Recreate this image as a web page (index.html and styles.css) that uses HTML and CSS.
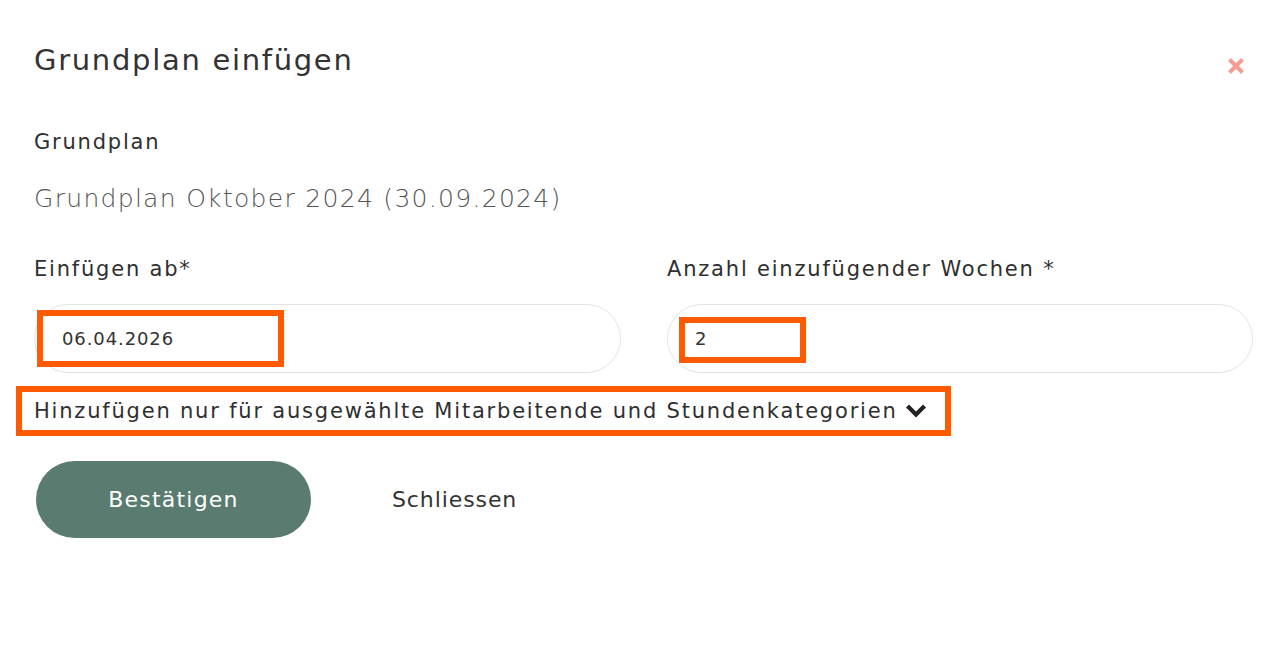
FILE: index.html
```html
<!DOCTYPE html>
<html lang="de">
<head>
<meta charset="utf-8">
<title>Grundplan einfügen</title>
<link rel="stylesheet" href="styles.css">
</head>
<body>
<div class="modal">
  <div class="modal-header">
    <h1 class="modal-title">Grundplan einfügen</h1>
    <button class="close" aria-label="Schliessen">
      <svg width="18" height="18" viewBox="0 0 18 18"><path d="M2.5 2.5 L15.5 15.5 M15.5 2.5 L2.5 15.5" stroke="#f59d95" stroke-width="4"/></svg>
    </button>
  </div>
  <div class="field">
    <div class="label">Grundplan</div>
    <div class="value">Grundplan Oktober 2024 (30.09.2024)</div>
  </div>
  <div class="row">
    <div class="col">
      <div class="label">Einfügen ab*</div>
      <div class="input-wrap">
        <div class="input">06.04.2026</div>
        <span class="mark mark-date"></span>
      </div>
    </div>
    <div class="col">
      <div class="label">Anzahl einzufügender Wochen *</div>
      <div class="input-wrap">
        <div class="input">2</div>
        <span class="mark mark-num"></span>
      </div>
    </div>
  </div>
  <div class="toggle-wrap">
    <div class="toggle">Hinzufügen nur für ausgewählte Mitarbeitende und Stundenkategorien
      <svg class="chev" width="24" height="16" viewBox="0 0 24 16"><path d="M3.5 4 L12 12.5 L20.5 4" fill="none" stroke="#222" stroke-width="4.2"/></svg>
    </div>
    <span class="mark mark-toggle"></span>
  </div>
  <div class="actions">
    <button class="btn-primary">Bestätigen</button>
    <button class="btn-link">Schliessen</button>
  </div>
</div>
</body>
</html>
```
FILE: styles.css
```css
html, body {
  margin: 0;
  padding: 0;
  background: #fff;
}
body {
  font-family: "DejaVu Sans", "Open Sans", sans-serif;
  color: #333;
  width: 1284px;
  height: 648px;
  overflow: hidden;
}
.modal {
  padding: 41px 31px 0 34px;
}
.modal-header {
  display: flex;
  justify-content: space-between;
  align-items: flex-start;
}
.modal-title {
  margin: 0;
  font-size: 29px;
  font-weight: 400;
  line-height: 38px;
  letter-spacing: 1.7px;
  color: #333;
}
.close {
  border: 0;
  background: none;
  padding: 0;
  margin: 16px 8px 0 0;
  width: 18px;
  height: 18px;
  display: block;
}
.close svg { display: block; }
.field {
  margin-top: 49px;
}
.label {
  font-size: 21px;
  line-height: 28px;
  letter-spacing: 1.8px;
  color: #2f2f2f;
}
.value {
  margin-top: 26px;
  font-size: 25px;
  line-height: 34px;
  font-weight: 300;
  letter-spacing: 1.3px;
  color: #555;
}
.row {
  display: grid;
  grid-template-columns: 587px 586px;
  column-gap: 46px;
  margin-top: 39px;
}
.input-wrap {
  position: relative;
  margin-top: 21px;
}
.input {
  height: 67px;
  border: 1px solid #e3e3e3;
  border-radius: 35px;
  box-sizing: content-box;
  padding: 0 0 0 27px;
  display: flex;
  align-items: center;
  font-size: 18px;
  letter-spacing: 0.9px;
  color: #333;
}
.mark {
  position: absolute;
  border: 6px solid #ff5a00;
  box-sizing: border-box;
  pointer-events: none;
}
.mark-date {
  left: 3px;
  top: 6px;
  width: 247px;
  height: 57px;
}
.mark-num {
  left: 12px;
  top: 13px;
  width: 127px;
  height: 46px;
}
.toggle-wrap {
  position: relative;
  margin-top: 24px;
  height: 28px;
}
.toggle {
  font-size: 21px;
  line-height: 28px;
  letter-spacing: 1.8px;
  color: #2f2f2f;
  display: flex;
  align-items: center;
  white-space: nowrap;
}
.chev {
  margin-left: 6px;
  margin-top: -3px;
  display: block;
}
.mark-toggle {
  left: -18px;
  top: -11px;
  width: 935px;
  height: 50px;
}
.actions {
  display: flex;
  align-items: center;
  margin-top: 36px;
  margin-left: 2px;
}
.btn-primary {
  width: 275px;
  height: 77px;
  border: 0;
  border-radius: 39px;
  background: #5a7b70;
  color: #fff;
  font-family: inherit;
  font-size: 22px;
  letter-spacing: 1.2px;
}
.btn-link {
  border: 0;
  background: none;
  font-family: inherit;
  font-size: 22px;
  letter-spacing: 0.9px;
  color: #333;
  margin-left: 81px;
  padding: 0;
}
```
